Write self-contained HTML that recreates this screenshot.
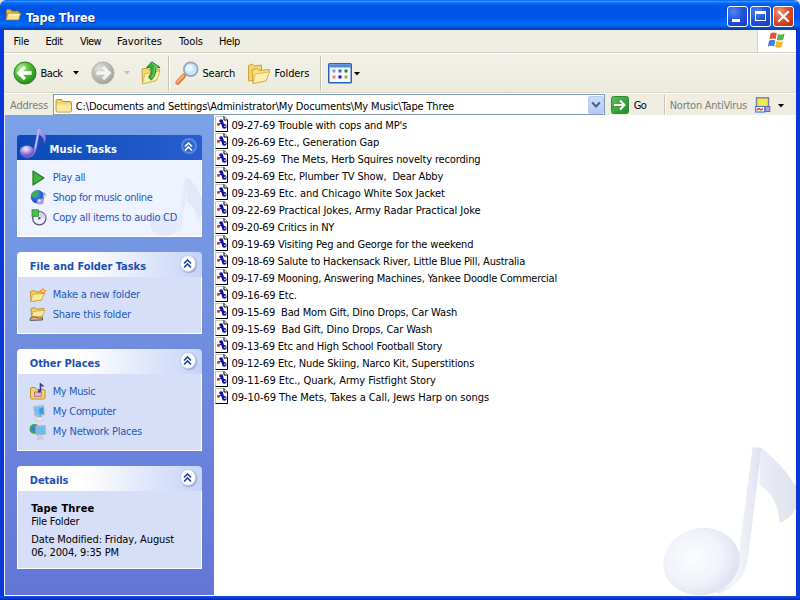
<!DOCTYPE html>
<html><head><meta charset="utf-8"><title>Tape Three</title>
<style>
*{box-sizing:border-box;margin:0;padding:0}
html,body{width:800px;height:600px;overflow:hidden;background:#0a37d8}
#bb{left:0;top:596px;width:800px;height:4px;background:linear-gradient(180deg,#1c54e4 0%,#0a3ad8 45%,#0426b4 100%)}
.cn{position:absolute;top:0;width:6px;height:6px;background:#e6e4dc}
body{font-family:'DejaVu Sans Condensed','Liberation Sans',sans-serif;font-size:11px;color:#000;position:relative}
.abs{position:absolute}
/* every text is positioned by its baseline: line-height 0 trick */
.tx{position:absolute;white-space:pre;line-height:20px;margin-top:-13px;height:20px}
.b{font-weight:bold}
.lnk{color:#2456b8}
.hd{color:#1d4fb5;font-weight:bold}
#title{left:0;top:0;width:800px;height:30px;border-radius:6px 6px 0 0;background:linear-gradient(180deg,#0058ee 0%,#3593ff 4%,#288eff 6%,#127dff 8%,#036ffc 10%,#0262ee 14%,#0057e5 20%,#0054e3 24%,#0055eb 56%,#005bf5 66%,#026afe 76%,#0062ef 86%,#0052d6 92%,#0040ab 96%,#0a3fdc 100%)}
#tt{color:#fff;font-weight:bold;font-size:12.5px;text-shadow:1px 1px 0 #0f2f8f}
.cb{position:absolute;top:6px;width:21px;height:21px;border:1px solid #fff;border-radius:3px;background:radial-gradient(circle at 30% 25%,#5584f4 0%,#2355dc 45%,#1638b6 100%)}
#menubar{left:4px;top:30px;width:792px;height:22px;background:#efeee5}
#logo{left:757px;top:30px;width:39px;height:22px;background:#fff;border-left:1px solid #d6d2c2}
#toolbar{left:4px;top:52px;width:792px;height:41px;background:linear-gradient(180deg,#f2f1ea 0%,#efeee3 60%,#eeeadc 100%);border-top:1px solid #d2cfc2;box-shadow:inset 0 1px 0 #fff}
.sep{position:absolute;top:56px;width:2px;height:35px;border-left:1px solid #c5c2b2;border-right:1px solid #fff}
#addr{left:4px;top:92px;width:792px;height:23px;background:#efede2;border-top:1px solid #dcd9cc;box-shadow:inset 0 1px 0 #fff}
#abox{left:53px;top:94px;width:552px;height:21px;background:#fff;border:1px solid #7f9db9}
#left{left:4px;top:115px;width:210px;height:481px;background:linear-gradient(180deg,#7ba2e7 0%,#6375d6 100%);border-left:1px solid #e8eefb;border-bottom:1px solid #fff}
#files{left:214px;top:115px;width:582px;height:481px;background:#fff}
.ph{position:absolute;left:17px;width:185px;height:25px;border-radius:4px 4px 0 0;background:linear-gradient(90deg,#fff 0%,#fff 35%,#c6d3f7 100%)}
.pb{position:absolute;left:17px;width:185px;background:#d6dff7;border:1px solid #fff;border-top:0}
.chev{position:absolute;width:16.6px;height:16.6px;border-radius:50%;background:#fff;border:1px solid #c0cdf0;box-shadow:1px 1px 1px rgba(60,80,160,.35)}
</style></head><body>

<i class="cn" style="left:0"></i><i class="cn" style="left:794px"></i><div id="title" class="abs"></div><div id="bb" class="abs"></div>
<svg class="abs" style="left:5px;top:8.4px" width="16.6" height="13" viewBox="0 0 18 14" preserveAspectRatio="none"><path d="M1.5 2.6 Q1.5 1.6 2.5 1.6 L6 1.6 L7.4 3.4 L14 3.4 Q15 3.4 15 4.4 L15 12.4 L1.5 12.4Z" fill="#e9b93a" stroke="#a87c18" stroke-width=".8"/><path d="M3.2 5.6 L17 5.6 L14.8 12.8 L1.2 12.8Z" fill="#fbe487" stroke="#b88a20" stroke-width=".8" stroke-linejoin="round"/><path d="M3.8 6.4 L16 6.4 L15.4 8.4 L3.2 8.4Z" fill="#fff3b8"/></svg>
<span id="tt" class="tx " style="left:26px;top:20.6px;letter-spacing:-0.073px;">Tape Three</span>
<div class="cb" style="left:727px"><i class="abs" style="left:4px;top:12px;width:8px;height:3px;background:#fff"></i></div>
<div class="cb" style="left:750px"><i class="abs" style="left:4px;top:4px;width:11px;height:10px;border:1px solid #fff;border-top:3px solid #fff"></i></div>
<div class="cb" style="left:773px;background:radial-gradient(circle at 30% 25%,#f29a78 0%,#e04c2a 45%,#b62a0a 100%)"><svg class="abs" style="left:3px;top:3px" width="13" height="13" viewBox="0 0 13 13"><path d="M2 2 L11 11 M11 2 L2 11" stroke="#fff" stroke-width="2.2" stroke-linecap="square"/></svg></div>
<div id="menubar" class="abs"></div><div id="logo" class="abs"></div>
<span id="m1" class="tx " style="left:13.5px;top:45px;letter-spacing:-0.246px;">File</span>
<span id="m2" class="tx " style="left:45.6px;top:45px;letter-spacing:-0.570px;">Edit</span>
<span id="m3" class="tx " style="left:80px;top:45px;letter-spacing:-0.617px;">View</span>
<span id="m4" class="tx " style="left:117px;top:45px;letter-spacing:0.045px;">Favorites</span>
<span id="m5" class="tx " style="left:179px;top:45px;letter-spacing:-0.040px;">Tools</span>
<span id="m6" class="tx " style="left:219px;top:45px;letter-spacing:-0.395px;">Help</span>
<svg class="abs" style="left:767px;top:31px" width="21" height="19" viewBox="0 0 21 19"><path d="M3.5 2.5 Q6.5 0.5 9.8 2.3 L8.6 8.2 Q5.5 6.6 2.3 8.5Z" fill="#e8542a"/><path d="M11 2.9 Q14 4.6 17.6 2.6 L16.3 8.6 Q13 10.4 9.8 8.7Z" fill="#5eb344"/><path d="M2 9.8 Q5.2 7.9 8.3 9.5 L7.1 15.4 Q4 13.8 0.8 15.8Z" fill="#3f7fdc"/><path d="M9.5 10.1 Q12.8 11.8 16 10 L14.8 15.9 Q11.6 17.7 8.3 16Z" fill="#f4b62a"/></svg>
<div id="toolbar" class="abs"></div>
<div class="sep" style="left:168px"></div><div class="sep" style="left:320px"></div>
<svg class="abs" style="left:13px;top:61px" width="24" height="24" viewBox="0 0 24 24"><defs><radialGradient id="gb" cx="35%" cy="30%" r="75%"><stop offset="0" stop-color="#c4f09a"/><stop offset=".45" stop-color="#52c038"/><stop offset="1" stop-color="#23881c"/></radialGradient></defs><circle cx="12" cy="12" r="11" fill="url(#gb)" stroke="#2a7a22" stroke-width="1"/><path d="M12 5.8 L5.8 12 L12 18.2 M7 12 H18.6" fill="none" stroke="#fff" stroke-width="3.3" stroke-linejoin="miter"/></svg>
<span id="tb1" class="tx " style="left:40.6px;top:77px;letter-spacing:-0.535px;">Back</span>
<svg class="abs" style="left:73px;top:71px" width="6" height="4" viewBox="0 0 6 4"><path d="M0 0H6L3 3.5Z" fill="#000"/></svg>
<svg class="abs" style="left:91px;top:61px" width="24" height="24" viewBox="0 0 24 24"><defs><radialGradient id="gf" cx="35%" cy="30%" r="75%"><stop offset="0" stop-color="#e2e2de"/><stop offset=".5" stop-color="#bdbdb8"/><stop offset="1" stop-color="#a2a29c"/></radialGradient></defs><circle cx="12" cy="12" r="11" fill="url(#gf)" stroke="#b0b0a8" stroke-width="1"/><path d="M12 5.8 L18.2 12 L12 18.2 M17 12 H5.4" fill="none" stroke="#f4f4f0" stroke-width="3.3" stroke-linejoin="miter"/></svg>
<svg class="abs" style="left:124px;top:71px" width="6" height="4" viewBox="0 0 6 4"><path d="M0 0H6L3 3.5Z" fill="#c0bdb0"/></svg>
<svg class="abs" style="left:141px;top:61px" width="21" height="24" viewBox="0 0 21 24"><path d="M1 8 L6.5 7 L8 9 L18.8 8 L15.5 19.5 L1.5 22.8Z" fill="#f5d865" stroke="#c9a23a" stroke-width="1"/><path d="M4 12.8 L19 10.2 L15.5 19.5 L1.5 22.8Z" fill="#fcefaa" stroke="#d9b24a" stroke-width=".8"/><path d="M5.6 6.4 L10.8 0.8 L19 6.4 L14.6 6.6 Q15.6 13.5 10.4 19 L7.6 16.4 Q11.4 12 9.8 6.6Z" fill="#35b034" stroke="#1c7a1f" stroke-width=".9"/><path d="M10.8 2.2 L16.4 6 L13.4 6 Q14.4 12.5 10.6 17" fill="none" stroke="#7fdc6a" stroke-width=".9"/></svg>
<svg class="abs" style="left:174px;top:61px" width="26" height="25" viewBox="0 0 26 25"><path d="M3.6 21.6 L10 14.6" stroke="#d9824a" stroke-width="4.6" stroke-linecap="round"/><path d="M3.4 21 L9.4 14.4" stroke="#f2b88a" stroke-width="1.8" stroke-linecap="round"/><circle cx="16.7" cy="8.3" r="6.9" fill="#c6e6fb" stroke="#98a4b6" stroke-width="1.7"/><circle cx="15.6" cy="7.2" r="3.4" fill="#e8f6ff"/></svg>
<span id="tb2" class="tx " style="left:202.5px;top:77px;letter-spacing:-0.247px;">Search</span>
<svg class="abs" style="left:247px;top:62px" width="24" height="23" viewBox="0 0 24 23"><path d="M1.5 3.5 L5.5 2 L7.5 4 L14.5 3 L14.5 17 L1.5 19Z" fill="#f3d36a" stroke="#caa43c" stroke-width="1"/><path d="M5 8 L9.5 6.5 L11.5 8.5 L22.5 7.5 L19 19 L6 21.5Z" fill="#f7de7e" stroke="#caa43c" stroke-width="1"/><path d="M8 12 L22.5 10 L19 19 L6 21.5Z" fill="#fbeeb0" stroke="#d2ab45" stroke-width=".8"/></svg>
<span id="tb3" class="tx " style="left:274.4px;top:77px;letter-spacing:-0.102px;">Folders</span>
<svg class="abs" style="left:328px;top:63px" width="24" height="21" viewBox="0 0 24 21"><rect x=".75" y=".75" width="22.5" height="19" rx=".8" fill="#f4f8fe" stroke="#2a63b8" stroke-width="1.5"/><rect x="1.5" y="1.5" width="21" height="3" fill="#4d8be0"/><rect x="4.5" y="6.5" width="3" height="3" fill="#9a9ac8"/><rect x="10.5" y="6.5" width="3" height="3" fill="#2f6fc8"/><rect x="16.5" y="6.5" width="3" height="3" fill="#1f8a1f"/><rect x="4.5" y="12.5" width="3" height="3" fill="#e08a5a"/><rect x="10.5" y="12.5" width="3" height="3" fill="#1a1a9a"/><rect x="16.5" y="12.5" width="3" height="3" fill="#b8a428"/></svg>
<svg class="abs" style="left:354px;top:72px" width="6" height="4" viewBox="0 0 6 4"><path d="M0 0H6L3 3.5Z" fill="#000"/></svg>
<div id="addr" class="abs"></div><div id="abox" class="abs"></div>
<span id="ad0" class="tx " style="left:10px;top:108.7px;letter-spacing:-0.196px;color:#7f7c73">Address</span>
<svg class="abs" style="left:55px;top:98px" width="18" height="15" viewBox="0 0 18 15"><path d="M1 3 Q1 1.5 2.5 1.5 L6.5 1.5 L8 3.5 L15 3.5 Q16.5 3.5 16.5 5 L16.5 12.5 Q16.5 14 15 14 L2.5 14 Q1 14 1 12.5Z" fill="#f3d36a" stroke="#b8912e" stroke-width="1"/><path d="M1.8 6.5 L16 6.5 L16 12.5 Q16 13.5 15 13.5 L2.8 13.5 Q1.8 13.5 1.8 12.5Z" fill="#fbe9a0"/></svg>
<span id="ad1" class="tx " style="left:75.8px;top:110px;letter-spacing:-0.165px;">C:\Documents and Settings\Administrator\My Documents\My Music\Tape Three</span>
<div class="abs" style="left:588px;top:96px;width:16px;height:18px;border-radius:2px;background:linear-gradient(180deg,#cfdcfb,#b5c8f5);border:1px solid #b9c9f2"></div><svg class="abs" style="left:591px;top:101px" width="10" height="8" viewBox="0 0 10 8"><path d="M1.2 1.5 L5 5.5 L8.8 1.5" fill="none" stroke="#4d6185" stroke-width="2"/></svg>
<svg class="abs" style="left:611px;top:96px" width="18" height="18" viewBox="0 0 18 18"><defs><linearGradient id="gg" x1="0" y1="0" x2="1" y2="1"><stop offset="0" stop-color="#5ec05a"/><stop offset="1" stop-color="#1f8a2a"/></linearGradient></defs><rect x=".5" y=".5" width="17" height="17" rx="2" fill="url(#gg)" stroke="#2f8a35"/><path d="M3 9 H13 M9 4.5 L13.5 9 L9 13.5" fill="none" stroke="#fff" stroke-width="2"/></svg>
<span id="ad2" class="tx " style="left:633.7px;top:109px;letter-spacing:-0.715px;">Go</span>
<div class="sep" style="left:664px;top:95px;height:20px"></div>
<span id="ad3" class="tx " style="left:669.7px;top:109px;letter-spacing:-0.251px;color:#7f7c73">Norton AntiVirus</span>
<svg class="abs" style="left:755px;top:97px" width="16" height="16" viewBox="0 0 16 16"><rect x="1.5" y=".8" width="12" height="9" fill="#f2ea4a" stroke="#7a7aa0" stroke-width="1.4"/><rect x=".7" y="9.5" width="9" height="5.5" fill="#fff" stroke="#3f7fdc" stroke-width="1.2"/><path d="M2 13 L4 11.5 L6 13 L8 11.5" stroke="#d22" stroke-width="1.2" fill="none"/><rect x="10.2" y="9.5" width="4.6" height="5" fill="#a9a4e0" stroke="#6a6aa8" stroke-width="1"/></svg>
<svg class="abs" style="left:778px;top:104px" width="6" height="4" viewBox="0 0 6 4"><path d="M0 0H6L3 3.5Z" fill="#000"/></svg>
<div id="left" class="abs"></div><div id="files" class="abs"></div>
<svg class="abs" style="left:215px;top:116px" width="13" height="16" viewBox="0 0 13 16"><path d="M.5 .5 H9 L12.5 4 V15.5 H.5Z" fill="#fff"/><path d="M.5 15.5 V.5 H9" fill="none" stroke="#c4c4c4" stroke-width="1"/><path d="M9 .5 L12.5 4 V15.5 H.5" fill="none" stroke="#000" stroke-width="1"/><path d="M9 .5 V4 H12.5" fill="#fff" stroke="#000" stroke-width="1"/><path d="M5.6 4.8 Q7 4.4 7 6.4 Q7.2 8.6 9.2 10.2" fill="none" stroke="#10109c" stroke-width="2.7" stroke-linecap="round"/><circle cx="9.3" cy="10.4" r="2.3" fill="#10109c"/><circle cx="10" cy="10.2" r=".8" fill="#fff"/><rect x="2.2" y="7.2" width="2.4" height="2.5" fill="#d01818"/><path d="M4.4 8 L6.6 6.8" stroke="#10109c" stroke-width="1.2"/></svg>
<span id="r0" class="tx " style="left:231.4px;top:129px;letter-spacing:-0.159px;">09-27-69 Trouble with cops and MP's</span>
<svg class="abs" style="left:215px;top:133px" width="13" height="16" viewBox="0 0 13 16"><path d="M.5 .5 H9 L12.5 4 V15.5 H.5Z" fill="#fff"/><path d="M.5 15.5 V.5 H9" fill="none" stroke="#c4c4c4" stroke-width="1"/><path d="M9 .5 L12.5 4 V15.5 H.5" fill="none" stroke="#000" stroke-width="1"/><path d="M9 .5 V4 H12.5" fill="#fff" stroke="#000" stroke-width="1"/><path d="M5.6 4.8 Q7 4.4 7 6.4 Q7.2 8.6 9.2 10.2" fill="none" stroke="#10109c" stroke-width="2.7" stroke-linecap="round"/><circle cx="9.3" cy="10.4" r="2.3" fill="#10109c"/><circle cx="10" cy="10.2" r=".8" fill="#fff"/><rect x="2.2" y="7.2" width="2.4" height="2.5" fill="#d01818"/><path d="M4.4 8 L6.6 6.8" stroke="#10109c" stroke-width="1.2"/></svg>
<span id="r1" class="tx " style="left:231.4px;top:146px;letter-spacing:-0.125px;">09-26-69 Etc., Generation Gap</span>
<svg class="abs" style="left:215px;top:150px" width="13" height="16" viewBox="0 0 13 16"><path d="M.5 .5 H9 L12.5 4 V15.5 H.5Z" fill="#fff"/><path d="M.5 15.5 V.5 H9" fill="none" stroke="#c4c4c4" stroke-width="1"/><path d="M9 .5 L12.5 4 V15.5 H.5" fill="none" stroke="#000" stroke-width="1"/><path d="M9 .5 V4 H12.5" fill="#fff" stroke="#000" stroke-width="1"/><path d="M5.6 4.8 Q7 4.4 7 6.4 Q7.2 8.6 9.2 10.2" fill="none" stroke="#10109c" stroke-width="2.7" stroke-linecap="round"/><circle cx="9.3" cy="10.4" r="2.3" fill="#10109c"/><circle cx="10" cy="10.2" r=".8" fill="#fff"/><rect x="2.2" y="7.2" width="2.4" height="2.5" fill="#d01818"/><path d="M4.4 8 L6.6 6.8" stroke="#10109c" stroke-width="1.2"/></svg>
<span id="r2" class="tx " style="left:231.4px;top:163px;letter-spacing:-0.144px;">09-25-69  The Mets, Herb Squires novelty recording</span>
<svg class="abs" style="left:215px;top:167px" width="13" height="16" viewBox="0 0 13 16"><path d="M.5 .5 H9 L12.5 4 V15.5 H.5Z" fill="#fff"/><path d="M.5 15.5 V.5 H9" fill="none" stroke="#c4c4c4" stroke-width="1"/><path d="M9 .5 L12.5 4 V15.5 H.5" fill="none" stroke="#000" stroke-width="1"/><path d="M9 .5 V4 H12.5" fill="#fff" stroke="#000" stroke-width="1"/><path d="M5.6 4.8 Q7 4.4 7 6.4 Q7.2 8.6 9.2 10.2" fill="none" stroke="#10109c" stroke-width="2.7" stroke-linecap="round"/><circle cx="9.3" cy="10.4" r="2.3" fill="#10109c"/><circle cx="10" cy="10.2" r=".8" fill="#fff"/><rect x="2.2" y="7.2" width="2.4" height="2.5" fill="#d01818"/><path d="M4.4 8 L6.6 6.8" stroke="#10109c" stroke-width="1.2"/></svg>
<span id="r3" class="tx " style="left:231.4px;top:180px;letter-spacing:-0.163px;">09-24-69 Etc, Plumber TV Show,  Dear Abby</span>
<svg class="abs" style="left:215px;top:184px" width="13" height="16" viewBox="0 0 13 16"><path d="M.5 .5 H9 L12.5 4 V15.5 H.5Z" fill="#fff"/><path d="M.5 15.5 V.5 H9" fill="none" stroke="#c4c4c4" stroke-width="1"/><path d="M9 .5 L12.5 4 V15.5 H.5" fill="none" stroke="#000" stroke-width="1"/><path d="M9 .5 V4 H12.5" fill="#fff" stroke="#000" stroke-width="1"/><path d="M5.6 4.8 Q7 4.4 7 6.4 Q7.2 8.6 9.2 10.2" fill="none" stroke="#10109c" stroke-width="2.7" stroke-linecap="round"/><circle cx="9.3" cy="10.4" r="2.3" fill="#10109c"/><circle cx="10" cy="10.2" r=".8" fill="#fff"/><rect x="2.2" y="7.2" width="2.4" height="2.5" fill="#d01818"/><path d="M4.4 8 L6.6 6.8" stroke="#10109c" stroke-width="1.2"/></svg>
<span id="r4" class="tx " style="left:231.4px;top:197px;letter-spacing:-0.089px;">09-23-69 Etc. and Chicago White Sox Jacket</span>
<svg class="abs" style="left:215px;top:201px" width="13" height="16" viewBox="0 0 13 16"><path d="M.5 .5 H9 L12.5 4 V15.5 H.5Z" fill="#fff"/><path d="M.5 15.5 V.5 H9" fill="none" stroke="#c4c4c4" stroke-width="1"/><path d="M9 .5 L12.5 4 V15.5 H.5" fill="none" stroke="#000" stroke-width="1"/><path d="M9 .5 V4 H12.5" fill="#fff" stroke="#000" stroke-width="1"/><path d="M5.6 4.8 Q7 4.4 7 6.4 Q7.2 8.6 9.2 10.2" fill="none" stroke="#10109c" stroke-width="2.7" stroke-linecap="round"/><circle cx="9.3" cy="10.4" r="2.3" fill="#10109c"/><circle cx="10" cy="10.2" r=".8" fill="#fff"/><rect x="2.2" y="7.2" width="2.4" height="2.5" fill="#d01818"/><path d="M4.4 8 L6.6 6.8" stroke="#10109c" stroke-width="1.2"/></svg>
<span id="r5" class="tx " style="left:231.4px;top:214px;letter-spacing:-0.068px;">09-22-69 Practical Jokes, Army Radar Practical Joke</span>
<svg class="abs" style="left:215px;top:218px" width="13" height="16" viewBox="0 0 13 16"><path d="M.5 .5 H9 L12.5 4 V15.5 H.5Z" fill="#fff"/><path d="M.5 15.5 V.5 H9" fill="none" stroke="#c4c4c4" stroke-width="1"/><path d="M9 .5 L12.5 4 V15.5 H.5" fill="none" stroke="#000" stroke-width="1"/><path d="M9 .5 V4 H12.5" fill="#fff" stroke="#000" stroke-width="1"/><path d="M5.6 4.8 Q7 4.4 7 6.4 Q7.2 8.6 9.2 10.2" fill="none" stroke="#10109c" stroke-width="2.7" stroke-linecap="round"/><circle cx="9.3" cy="10.4" r="2.3" fill="#10109c"/><circle cx="10" cy="10.2" r=".8" fill="#fff"/><rect x="2.2" y="7.2" width="2.4" height="2.5" fill="#d01818"/><path d="M4.4 8 L6.6 6.8" stroke="#10109c" stroke-width="1.2"/></svg>
<span id="r6" class="tx " style="left:231.4px;top:231px;letter-spacing:-0.226px;">09-20-69 Critics in NY</span>
<svg class="abs" style="left:215px;top:235px" width="13" height="16" viewBox="0 0 13 16"><path d="M.5 .5 H9 L12.5 4 V15.5 H.5Z" fill="#fff"/><path d="M.5 15.5 V.5 H9" fill="none" stroke="#c4c4c4" stroke-width="1"/><path d="M9 .5 L12.5 4 V15.5 H.5" fill="none" stroke="#000" stroke-width="1"/><path d="M9 .5 V4 H12.5" fill="#fff" stroke="#000" stroke-width="1"/><path d="M5.6 4.8 Q7 4.4 7 6.4 Q7.2 8.6 9.2 10.2" fill="none" stroke="#10109c" stroke-width="2.7" stroke-linecap="round"/><circle cx="9.3" cy="10.4" r="2.3" fill="#10109c"/><circle cx="10" cy="10.2" r=".8" fill="#fff"/><rect x="2.2" y="7.2" width="2.4" height="2.5" fill="#d01818"/><path d="M4.4 8 L6.6 6.8" stroke="#10109c" stroke-width="1.2"/></svg>
<span id="r7" class="tx " style="left:231.4px;top:248px;letter-spacing:-0.169px;">09-19-69 Visiting Peg and George for the weekend</span>
<svg class="abs" style="left:215px;top:252px" width="13" height="16" viewBox="0 0 13 16"><path d="M.5 .5 H9 L12.5 4 V15.5 H.5Z" fill="#fff"/><path d="M.5 15.5 V.5 H9" fill="none" stroke="#c4c4c4" stroke-width="1"/><path d="M9 .5 L12.5 4 V15.5 H.5" fill="none" stroke="#000" stroke-width="1"/><path d="M9 .5 V4 H12.5" fill="#fff" stroke="#000" stroke-width="1"/><path d="M5.6 4.8 Q7 4.4 7 6.4 Q7.2 8.6 9.2 10.2" fill="none" stroke="#10109c" stroke-width="2.7" stroke-linecap="round"/><circle cx="9.3" cy="10.4" r="2.3" fill="#10109c"/><circle cx="10" cy="10.2" r=".8" fill="#fff"/><rect x="2.2" y="7.2" width="2.4" height="2.5" fill="#d01818"/><path d="M4.4 8 L6.6 6.8" stroke="#10109c" stroke-width="1.2"/></svg>
<span id="r8" class="tx " style="left:231.4px;top:265px;letter-spacing:-0.206px;">09-18-69 Salute to Hackensack River, Little Blue Pill, Australia</span>
<svg class="abs" style="left:215px;top:269px" width="13" height="16" viewBox="0 0 13 16"><path d="M.5 .5 H9 L12.5 4 V15.5 H.5Z" fill="#fff"/><path d="M.5 15.5 V.5 H9" fill="none" stroke="#c4c4c4" stroke-width="1"/><path d="M9 .5 L12.5 4 V15.5 H.5" fill="none" stroke="#000" stroke-width="1"/><path d="M9 .5 V4 H12.5" fill="#fff" stroke="#000" stroke-width="1"/><path d="M5.6 4.8 Q7 4.4 7 6.4 Q7.2 8.6 9.2 10.2" fill="none" stroke="#10109c" stroke-width="2.7" stroke-linecap="round"/><circle cx="9.3" cy="10.4" r="2.3" fill="#10109c"/><circle cx="10" cy="10.2" r=".8" fill="#fff"/><rect x="2.2" y="7.2" width="2.4" height="2.5" fill="#d01818"/><path d="M4.4 8 L6.6 6.8" stroke="#10109c" stroke-width="1.2"/></svg>
<span id="r9" class="tx " style="left:231.4px;top:282px;letter-spacing:-0.217px;">09-17-69 Mooning, Answering Machines, Yankee Doodle Commercial</span>
<svg class="abs" style="left:215px;top:286px" width="13" height="16" viewBox="0 0 13 16"><path d="M.5 .5 H9 L12.5 4 V15.5 H.5Z" fill="#fff"/><path d="M.5 15.5 V.5 H9" fill="none" stroke="#c4c4c4" stroke-width="1"/><path d="M9 .5 L12.5 4 V15.5 H.5" fill="none" stroke="#000" stroke-width="1"/><path d="M9 .5 V4 H12.5" fill="#fff" stroke="#000" stroke-width="1"/><path d="M5.6 4.8 Q7 4.4 7 6.4 Q7.2 8.6 9.2 10.2" fill="none" stroke="#10109c" stroke-width="2.7" stroke-linecap="round"/><circle cx="9.3" cy="10.4" r="2.3" fill="#10109c"/><circle cx="10" cy="10.2" r=".8" fill="#fff"/><rect x="2.2" y="7.2" width="2.4" height="2.5" fill="#d01818"/><path d="M4.4 8 L6.6 6.8" stroke="#10109c" stroke-width="1.2"/></svg>
<span id="r10" class="tx " style="left:231.4px;top:299px;letter-spacing:-0.098px;">09-16-69 Etc.</span>
<svg class="abs" style="left:215px;top:303px" width="13" height="16" viewBox="0 0 13 16"><path d="M.5 .5 H9 L12.5 4 V15.5 H.5Z" fill="#fff"/><path d="M.5 15.5 V.5 H9" fill="none" stroke="#c4c4c4" stroke-width="1"/><path d="M9 .5 L12.5 4 V15.5 H.5" fill="none" stroke="#000" stroke-width="1"/><path d="M9 .5 V4 H12.5" fill="#fff" stroke="#000" stroke-width="1"/><path d="M5.6 4.8 Q7 4.4 7 6.4 Q7.2 8.6 9.2 10.2" fill="none" stroke="#10109c" stroke-width="2.7" stroke-linecap="round"/><circle cx="9.3" cy="10.4" r="2.3" fill="#10109c"/><circle cx="10" cy="10.2" r=".8" fill="#fff"/><rect x="2.2" y="7.2" width="2.4" height="2.5" fill="#d01818"/><path d="M4.4 8 L6.6 6.8" stroke="#10109c" stroke-width="1.2"/></svg>
<span id="r11" class="tx " style="left:231.4px;top:316px;letter-spacing:-0.156px;">09-15-69  Bad Mom Gift, Dino Drops, Car Wash</span>
<svg class="abs" style="left:215px;top:320px" width="13" height="16" viewBox="0 0 13 16"><path d="M.5 .5 H9 L12.5 4 V15.5 H.5Z" fill="#fff"/><path d="M.5 15.5 V.5 H9" fill="none" stroke="#c4c4c4" stroke-width="1"/><path d="M9 .5 L12.5 4 V15.5 H.5" fill="none" stroke="#000" stroke-width="1"/><path d="M9 .5 V4 H12.5" fill="#fff" stroke="#000" stroke-width="1"/><path d="M5.6 4.8 Q7 4.4 7 6.4 Q7.2 8.6 9.2 10.2" fill="none" stroke="#10109c" stroke-width="2.7" stroke-linecap="round"/><circle cx="9.3" cy="10.4" r="2.3" fill="#10109c"/><circle cx="10" cy="10.2" r=".8" fill="#fff"/><rect x="2.2" y="7.2" width="2.4" height="2.5" fill="#d01818"/><path d="M4.4 8 L6.6 6.8" stroke="#10109c" stroke-width="1.2"/></svg>
<span id="r12" class="tx " style="left:231.4px;top:333px;letter-spacing:-0.107px;">09-15-69  Bad Gift, Dino Drops, Car Wash</span>
<svg class="abs" style="left:215px;top:337px" width="13" height="16" viewBox="0 0 13 16"><path d="M.5 .5 H9 L12.5 4 V15.5 H.5Z" fill="#fff"/><path d="M.5 15.5 V.5 H9" fill="none" stroke="#c4c4c4" stroke-width="1"/><path d="M9 .5 L12.5 4 V15.5 H.5" fill="none" stroke="#000" stroke-width="1"/><path d="M9 .5 V4 H12.5" fill="#fff" stroke="#000" stroke-width="1"/><path d="M5.6 4.8 Q7 4.4 7 6.4 Q7.2 8.6 9.2 10.2" fill="none" stroke="#10109c" stroke-width="2.7" stroke-linecap="round"/><circle cx="9.3" cy="10.4" r="2.3" fill="#10109c"/><circle cx="10" cy="10.2" r=".8" fill="#fff"/><rect x="2.2" y="7.2" width="2.4" height="2.5" fill="#d01818"/><path d="M4.4 8 L6.6 6.8" stroke="#10109c" stroke-width="1.2"/></svg>
<span id="r13" class="tx " style="left:231.4px;top:350px;letter-spacing:-0.187px;">09-13-69 Etc and High School Football Story</span>
<svg class="abs" style="left:215px;top:354px" width="13" height="16" viewBox="0 0 13 16"><path d="M.5 .5 H9 L12.5 4 V15.5 H.5Z" fill="#fff"/><path d="M.5 15.5 V.5 H9" fill="none" stroke="#c4c4c4" stroke-width="1"/><path d="M9 .5 L12.5 4 V15.5 H.5" fill="none" stroke="#000" stroke-width="1"/><path d="M9 .5 V4 H12.5" fill="#fff" stroke="#000" stroke-width="1"/><path d="M5.6 4.8 Q7 4.4 7 6.4 Q7.2 8.6 9.2 10.2" fill="none" stroke="#10109c" stroke-width="2.7" stroke-linecap="round"/><circle cx="9.3" cy="10.4" r="2.3" fill="#10109c"/><circle cx="10" cy="10.2" r=".8" fill="#fff"/><rect x="2.2" y="7.2" width="2.4" height="2.5" fill="#d01818"/><path d="M4.4 8 L6.6 6.8" stroke="#10109c" stroke-width="1.2"/></svg>
<span id="r14" class="tx " style="left:231.4px;top:367px;letter-spacing:-0.174px;">09-12-69 Etc, Nude Skiing, Narco Kit, Superstitions</span>
<svg class="abs" style="left:215px;top:371px" width="13" height="16" viewBox="0 0 13 16"><path d="M.5 .5 H9 L12.5 4 V15.5 H.5Z" fill="#fff"/><path d="M.5 15.5 V.5 H9" fill="none" stroke="#c4c4c4" stroke-width="1"/><path d="M9 .5 L12.5 4 V15.5 H.5" fill="none" stroke="#000" stroke-width="1"/><path d="M9 .5 V4 H12.5" fill="#fff" stroke="#000" stroke-width="1"/><path d="M5.6 4.8 Q7 4.4 7 6.4 Q7.2 8.6 9.2 10.2" fill="none" stroke="#10109c" stroke-width="2.7" stroke-linecap="round"/><circle cx="9.3" cy="10.4" r="2.3" fill="#10109c"/><circle cx="10" cy="10.2" r=".8" fill="#fff"/><rect x="2.2" y="7.2" width="2.4" height="2.5" fill="#d01818"/><path d="M4.4 8 L6.6 6.8" stroke="#10109c" stroke-width="1.2"/></svg>
<span id="r15" class="tx " style="left:231.4px;top:384px;letter-spacing:-0.064px;">09-11-69 Etc., Quark, Army Fistfight Story</span>
<svg class="abs" style="left:215px;top:388px" width="13" height="16" viewBox="0 0 13 16"><path d="M.5 .5 H9 L12.5 4 V15.5 H.5Z" fill="#fff"/><path d="M.5 15.5 V.5 H9" fill="none" stroke="#c4c4c4" stroke-width="1"/><path d="M9 .5 L12.5 4 V15.5 H.5" fill="none" stroke="#000" stroke-width="1"/><path d="M9 .5 V4 H12.5" fill="#fff" stroke="#000" stroke-width="1"/><path d="M5.6 4.8 Q7 4.4 7 6.4 Q7.2 8.6 9.2 10.2" fill="none" stroke="#10109c" stroke-width="2.7" stroke-linecap="round"/><circle cx="9.3" cy="10.4" r="2.3" fill="#10109c"/><circle cx="10" cy="10.2" r=".8" fill="#fff"/><rect x="2.2" y="7.2" width="2.4" height="2.5" fill="#d01818"/><path d="M4.4 8 L6.6 6.8" stroke="#10109c" stroke-width="1.2"/></svg>
<span id="r16" class="tx " style="left:231.4px;top:401px;letter-spacing:-0.053px;">09-10-69 The Mets, Takes a Call, Jews Harp on songs</span>
<svg class="abs" style="left:660px;top:440px" width="136" height="156" viewBox="0 0 136 156"><defs><radialGradient id="nw" cx="42%" cy="42%" r="62%"><stop offset="0" stop-color="#fbfcfe"/><stop offset=".6" stop-color="#f1f3fa"/><stop offset=".88" stop-color="#e3e6f2"/><stop offset="1" stop-color="#dcdfee"/></radialGradient><linearGradient id="ns" x1="0" y1="0" x2="1" y2="0"><stop offset="0" stop-color="#e2e5f1"/><stop offset=".45" stop-color="#f6f7fc"/><stop offset="1" stop-color="#dfe2ef"/></linearGradient><linearGradient id="nf" x1="0" y1="0" x2="1" y2="0"><stop offset="0" stop-color="#eceef6"/><stop offset="1" stop-color="#dfe1ec"/></linearGradient></defs><path d="M92.6 7 L101.6 8 L88 118 Q84 146 58 154 L52 150 Q74 140 78.5 116Z" fill="url(#ns)"/><ellipse cx="41.5" cy="121.5" rx="38.5" ry="33.5" transform="rotate(-14 41.5 121.5)" fill="url(#nw)"/><path d="M101 7.6 Q120 22 136 46 L136 68 Q130 80 119.6 82.5 Q118 62 108 52 Q104 47.5 99 45Z" fill="url(#nf)"/></svg>
<div class="ph" style="top:135px;height:25px;background:linear-gradient(90deg,#0a4ab8 0%,#1a55c2 50%,#295dce 100%);border-radius:3px 3px 0 0"></div><div class="pb" style="top:160px;height:77px;background:#eff3ff"></div>
<svg class="abs" style="left:148px;top:174px" width="54" height="63" viewBox="0 0 54 63"><ellipse cx="17" cy="51" rx="15" ry="11" fill="#e4e9f9"/><path d="M28 56 L37 4 L41 5 L33 57Z" fill="#e6ebfa"/><path d="M39 4 L42 5 Q50 14 54 24 L54 40 Q52 46 49 47 Q49 38 45 33 Q42 29 39 28Z" fill="#e3e8f8"/></svg>
<svg class="abs" style="left:19px;top:127px" width="29" height="33" viewBox="0 0 29 33"><defs><radialGradient id="mn" cx="42%" cy="30%" r="75%"><stop offset="0" stop-color="#fbe6f4"/><stop offset=".3" stop-color="#c9b4ee"/><stop offset=".7" stop-color="#8266d2"/><stop offset="1" stop-color="#5a3aa8"/></radialGradient><linearGradient id="mf" x1="0" y1="0" x2="1" y2="1"><stop offset="0" stop-color="#b9aaf0"/><stop offset="1" stop-color="#7d68d0"/></linearGradient></defs><path d="M1.2 26 Q4 31.5 10 30.6 Q15.4 29.6 17.6 22 L21.4 2.2 L19 1.4 L15.4 19 Q14 25 10 27.6Z" fill="#8f7fe4"/><ellipse cx="7.9" cy="24.2" rx="7" ry="5.6" fill="url(#mn)"/><path d="M19.3 1.6 L20.6 2 L16.8 21 L15.6 21Z" fill="#c9c2f8"/><path d="M20 1.8 Q26.6 6 26.8 11.5 Q26.8 14.5 25 16.8 Q25.4 11 21 8 L20.4 4Z" fill="url(#mf)"/></svg>
<span id="h1" class="tx b" style="left:49.6px;top:153px;letter-spacing:0.140px;color:#fff">Music Tasks</span>
<div class="chev" style="left:180.5px;top:137.7px;background:#3462c6;border:2px solid #5a88e2;box-shadow:none"></div><svg class="abs" style="left:184.2px;top:141.5px" width="9" height="10" viewBox="0 0 9 10"><path d="M1 4.5 L4.5 1 L8 4.5 M1 8.5 L4.5 5 L8 8.5" fill="none" stroke="#fff" stroke-width="1.6"/></svg>
<svg class="abs" style="left:32px;top:170px" width="13" height="16" viewBox="0 0 13 16"><path d="M1 1 L12 8 L1 15Z" fill="#3fb53a" stroke="#1f7a22" stroke-width="1.2" stroke-linejoin="round"/></svg>
<span id="l1" class="tx lnk" style="left:52.7px;top:181px;letter-spacing:-0.357px;">Play all</span>
<svg class="abs" style="left:30px;top:189px" width="17" height="17" viewBox="0 0 17 17"><defs><radialGradient id="gl" cx="35%" cy="30%" r="75%"><stop offset="0" stop-color="#5aa4f4"/><stop offset=".6" stop-color="#2060d0"/><stop offset="1" stop-color="#143c9c"/></radialGradient></defs><circle cx="7.5" cy="7.8" r="6.8" fill="url(#gl)"/><path d="M2 5 Q4 1.8 8 1.6 Q9.5 3.5 7.5 5.5 Q6 7.5 4 7.5 Q2.5 8.5 1.4 7.5Z" fill="#3fb040"/><path d="M13.4 3 L14.6 3.4 L13.4 11 L12.2 11Z" fill="#b0a4ea"/><path d="M14 3.2 Q16.4 4.6 15.6 7.6 Q15.2 5.6 13.8 5.2Z" fill="#a496e4"/><ellipse cx="10.2" cy="12.6" rx="3.6" ry="3" fill="#a898e4"/><circle cx="9.4" cy="11.8" r="1.3" fill="#efe6fc"/></svg>
<span id="l2" class="tx lnk" style="left:52.7px;top:201px;letter-spacing:-0.361px;">Shop for music online</span>
<svg class="abs" style="left:31px;top:209px" width="16" height="17" viewBox="0 0 16 17"><circle cx="8.3" cy="9.3" r="6.6" fill="#f0eefc" stroke="#55557f" stroke-width="1.3"/><path d="M8.3 9.3 L8.3 3 A6.3 6.3 0 0 1 14.6 9.3Z" fill="#d8d0f4"/><rect x="1" y=".8" width="6.5" height="6.5" fill="#4fc04a" stroke="#2a8a2a" stroke-width=".8"/><circle cx="8.3" cy="9.3" r="1.2" fill="#55557f"/></svg>
<span id="l3" class="tx lnk" style="left:52.7px;top:221px;letter-spacing:-0.288px;">Copy all items to audio CD</span>
<div class="ph" style="top:252px"></div><div class="pb" style="top:277px;height:57px"></div>
<span id="h2" class="tx hd" style="left:29.8px;top:270px;letter-spacing:-0.036px;">File and Folder Tasks</span>
<div class="chev" style="left:179.6px;top:255px"></div><svg class="abs" style="left:183.2px;top:259px" width="9" height="10" viewBox="0 0 9 10"><path d="M1 4.5 L4.5 1 L8 4.5 M1 8.5 L4.5 5 L8 8.5" fill="none" stroke="#1f3f9a" stroke-width="1.6"/></svg>
<svg class="abs" style="left:29px;top:286px" width="18" height="17" viewBox="0 0 18 17"><path d="M1.5 5.5 L5.5 4.5 L7 6.2 L14 5.5 L12.5 14 L2 15.5Z" fill="#f3d36a" stroke="#b8912e" stroke-width="1"/><path d="M3.5 8.5 L15.5 7 L12.5 14 L2 15.5Z" fill="#fbe9a0" stroke="#c9a23a" stroke-width=".8"/><g transform="translate(0,1.2)"><path d="M14 0.2 L15.2 2.6 L17.8 3 L15.8 4.8 L16.4 7.4 L14 6.2 L11.6 7.4 L12.2 4.8 L10.2 3 L12.8 2.6Z" fill="#f08a2a"/><circle cx="14" cy="4" r="1.4" fill="#fbd75a"/></g></svg>
<span id="l4" class="tx lnk" style="left:52.7px;top:298px;letter-spacing:-0.201px;">Make a new folder</span>
<svg class="abs" style="left:29px;top:306px" width="18" height="15" viewBox="0 0 18 15"><path d="M2 2.5 L6 1.5 L7.5 3.2 L14.5 2.5 L13.5 10 L2.5 11.5Z" fill="#f3d36a" stroke="#b8912e" stroke-width="1"/><path d="M4 5.5 L16 4 L13.5 10 L2.5 11.5Z" fill="#fbe9a0" stroke="#c9a23a" stroke-width=".8"/><path d="M1 12.5 Q4 9 8 11.5 Q11 13 13.5 11.5 L13.5 14 L1 14.5Z" fill="#e8a07a" stroke="#333" stroke-width=".7"/></svg>
<span id="l5" class="tx lnk" style="left:52.7px;top:318px;letter-spacing:-0.195px;">Share this folder</span>
<div class="ph" style="top:349px"></div><div class="pb" style="top:374px;height:77px"></div>
<span id="h3" class="tx hd" style="left:29.8px;top:367px;letter-spacing:-0.069px;">Other Places</span>
<div class="chev" style="left:179.6px;top:352px"></div><svg class="abs" style="left:183.2px;top:356px" width="9" height="10" viewBox="0 0 9 10"><path d="M1 4.5 L4.5 1 L8 4.5 M1 8.5 L4.5 5 L8 8.5" fill="none" stroke="#1f3f9a" stroke-width="1.6"/></svg>
<svg class="abs" style="left:29px;top:383px" width="18" height="17" viewBox="0 0 18 17"><path d="M1.5 6 Q1.5 4.5 3 4.5 L6 4.5 L7.5 6.5 L14.5 6.5 Q16 6.5 16 8 L16 14.5 Q16 16 14.5 16 L3 16 Q1.5 16 1.5 14.5Z" fill="#f3d36a" stroke="#b8912e" stroke-width="1"/><rect x="5.5" y="9" width="7" height="4.5" fill="#e8b0c8" stroke="#a0608a" stroke-width=".7"/><path d="M11.5 8 L11.5 1 L14.5 3.5" fill="none" stroke="#3a3a8a" stroke-width="1.6"/><circle cx="10.5" cy="8.2" r="1.6" fill="#3a3a8a"/></svg>
<span id="l6" class="tx lnk" style="left:52.7px;top:395px;letter-spacing:-0.387px;">My Music</span>
<svg class="abs" style="left:31px;top:404.5px" width="16" height="17" viewBox="0 0 16 17"><path d="M2.6 1.6 L12.6 .6 L13.2 9.6 L4 11Z" fill="#6cc4f6" stroke="#b4bed0" stroke-width="1.3" stroke-linejoin="round"/><path d="M8 4 L12.4 2 L12.8 9 L8.5 9.6Z" fill="#3f9ae4"/><path d="M6.6 10.8 L10.4 10.2 L10.8 12.6 L6.8 13Z" fill="#9aa6c0"/><ellipse cx="8.4" cy="14" rx="4.6" ry="1.9" fill="#e6e8f2" stroke="#b8bcd0" stroke-width=".6"/></svg>
<span id="l7" class="tx lnk" style="left:52.7px;top:415px;letter-spacing:-0.314px;">My Computer</span>
<svg class="abs" style="left:29px;top:423px" width="18" height="18" viewBox="0 0 18 18"><circle cx="5.5" cy="6" r="5" fill="#3aa84a"/><path d="M2 4 Q5 2 8 4 Q7 8 3 8Z" fill="#3a7fd8"/><path d="M7 3.5 L16 2.8 L16.5 11 L7.5 12Z" fill="#5fc0f4" stroke="#a8b4c8" stroke-width="1.3"/><path d="M9 13 L14 12.5 L15 16.5 L7.5 17Z" fill="#c8ccd8"/></svg>
<span id="l8" class="tx lnk" style="left:52.7px;top:435px;letter-spacing:-0.246px;">My Network Places</span>
<div class="ph" style="top:466px"></div><div class="pb" style="top:491px;height:78px"></div>
<span id="h4" class="tx hd" style="left:29.8px;top:484px;letter-spacing:-0.060px;">Details</span>
<div class="chev" style="left:179.6px;top:469px"></div><svg class="abs" style="left:183.2px;top:473px" width="9" height="10" viewBox="0 0 9 10"><path d="M1 4.5 L4.5 1 L8 4.5 M1 8.5 L4.5 5 L8 8.5" fill="none" stroke="#1f3f9a" stroke-width="1.6"/></svg>
<span id="d1" class="tx b" style="left:31.2px;top:512px;letter-spacing:0.193px;">Tape Three</span>
<span id="d2" class="tx " style="left:31.2px;top:525px;letter-spacing:-0.189px;">File Folder</span>
<span id="d3" class="tx " style="left:31.2px;top:543px;letter-spacing:-0.122px;">Date Modified: Friday, August</span>
<span id="d4" class="tx " style="left:31.2px;top:556px;letter-spacing:-0.142px;">06, 2004, 9:35 PM</span>
</body></html>
